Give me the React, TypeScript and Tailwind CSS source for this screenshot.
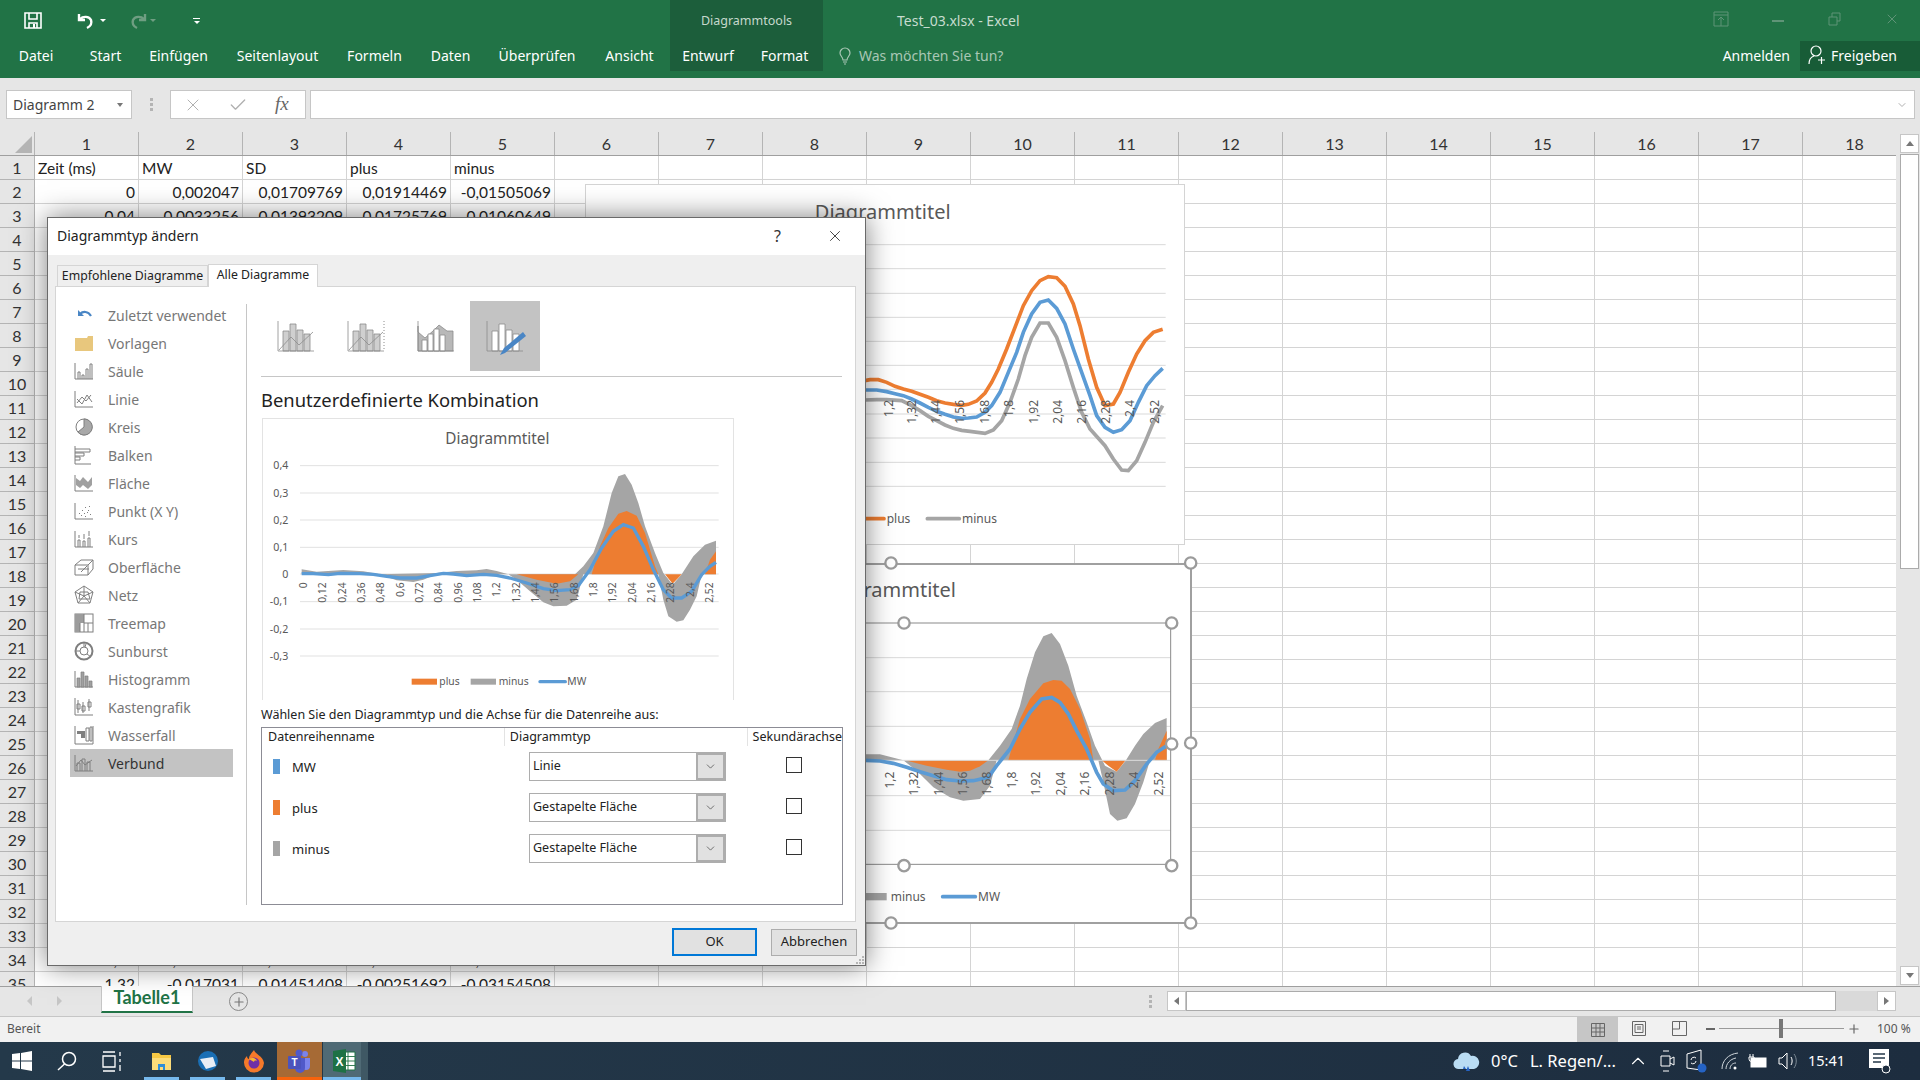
import type { ReactNode } from "react";
import { ChevronDown, X, Check, Plus, ChevronUp } from "lucide-react";

const ORANGE = "#ed7d31";
const BLUE = "#5b9bd5";
const GRAY = "#a5a5a5";
const TEXT = "#595959";

type Pt = number[];
const line = (pts: Pt[]) => pts.map((p) => p.join(",")).join(" ");

const sheetRows: Record<number, string[]> = {
  1: ["Zeit (ms)", "MW", "SD", "plus", "minus"],
  2: ["0", "0,002047", "0,01709769", "0,01914469", "-0,01505069"],
  3: ["0,04", "0,0033256", "0,01393209", "0,01725769", "-0,01060649"],
  34: ["1,28", "-0,0151466", "0,01482059", "-0,00032601", "-0,02996719"],
  35: ["1,32", "-0,017031", "0,01451408", "-0,00251692", "-0,03154508"],
};

function Sheet() {
  const cols = Array.from({ length: 18 }, (_, i) => i + 1);
  const rows = Array.from({ length: 35 }, (_, i) => i + 1);
  return (
    <div className="min-w-0 flex-1 overflow-hidden bg-white font-['Lato',sans-serif] text-[15.5px] text-[#222]">
      <div className="flex h-6 border-b border-[#9f9f9f] bg-[#e6e6e6]">
        <div className="relative w-[35px] shrink-0 border-r border-[#b4b4b4]">
          <div className="absolute right-[2px] bottom-[2px] h-0 w-0 border-b-[17px] border-l-[17px] border-b-[#b4b4b4] border-l-transparent" />
        </div>
        {cols.map((c) => (
          <div key={c} className="flex w-[104px] shrink-0 items-center justify-center border-r border-[#b4b4b4] text-[16px] text-[#333]">
            {c}
          </div>
        ))}
      </div>
      {rows.map((r) => (
        <div key={r} className="flex h-6">
          <div className="flex w-[35px] shrink-0 items-center justify-center border-r border-b border-[#b4b4b4] bg-[#e6e6e6] text-[16px] text-[#333]">
            {r}
          </div>
          {cols.map((c, i) => {
            const v = sheetRows[r]?.[i];
            return (
              <div key={c} className={`flex w-[104px] shrink-0 items-center border-r border-b border-[#d4d4d4] px-[3px] pt-[2px] whitespace-nowrap ${r === 1 ? "justify-start" : "justify-end"}`}>
                {v}
              </div>
            );
          })}
        </div>
      ))}
    </div>
  );
}

function VLabels({ items, top, size, dx }: { items: [string, number][]; top: number; size: number; dx: number }) {
  return (
    <g fontSize={size} fill={TEXT} fontFamily="'Noto Sans',sans-serif">
      {items.map(([t, x]) => (
        <text key={t} textAnchor="end" transform={`translate(${x + dx} ${top}) rotate(-90)`}>
          {t}
        </text>
      ))}
    </g>
  );
}

function TopChart() {
  const grid = [197, 269, 343, 415, 487, 559, 631, 705, 777, 850, 922];
  const orange = [[-60, 604], [15, 605], [30, 602], [55, 602], [80, 610], [105, 622], [130, 630], [155, 637], [180, 646], [205, 655], [230, 665], [255, 672], [280, 676], [305, 679], [325, 676], [350, 666], [375, 642], [395, 610], [415, 570], [440, 510], [465, 445], [490, 380], [515, 335], [540, 305], [565, 293], [590, 296], [615, 322], [640, 375], [660, 440], [685, 540], [710, 625], [735, 680], [760, 675], [780, 640], [805, 580], [830, 525], [855, 485], [880, 460], [908, 451]];
  const blue = [[-60, 633], [15, 633], [50, 633], [80, 638], [105, 644], [130, 650], [155, 660], [180, 672], [205, 685], [230, 697], [255, 706], [280, 714], [305, 718], [325, 717], [350, 714], [375, 700], [395, 680], [420, 640], [445, 580], [470, 520], [490, 460], [515, 405], [540, 370], [565, 363], [590, 388], [615, 435], [640, 510], [665, 580], [690, 650], [710, 710], [735, 745], [760, 760], [785, 752], [810, 725], [835, 670], [860, 620], [885, 590], [908, 568]];
  const gray = [[-60, 663], [15, 663], [50, 662], [80, 662], [125, 665], [155, 680], [180, 695], [205, 712], [230, 725], [255, 738], [280, 748], [305, 754], [330, 757], [375, 763], [400, 753], [425, 725], [450, 670], [475, 600], [495, 530], [515, 475], [540, 432], [565, 432], [590, 475], [615, 545], [640, 625], [665, 700], [690, 750], [735, 800], [760, 840], [785, 873], [805, 875], [830, 845], [855, 790], [880, 730], [908, 680]];
  return (
    <div className="absolute top-[184px] left-[585px] h-[361px] w-[600px] border border-[#d4d4d4] bg-white">
      <svg width="598" height="359" viewBox="-822 18 1794 1077" className="block">
        <text x="272" y="119" textAnchor="end" fontSize="60" fill={TEXT} fontFamily="'Noto Sans',sans-serif">Diagrammtitel</text>
        {grid.map((y) => (
          <line key={y} x1="-700" x2="917" y1={y} y2={y} stroke="#d9d9d9" strokeWidth="3" />
        ))}
        <polyline points={line(gray)} fill="none" stroke={GRAY} strokeWidth="11" />
        <polyline points={line(orange)} fill="none" stroke={ORANGE} strokeWidth="11" />
        <polyline points={line(blue)} fill="none" stroke={BLUE} strokeWidth="11" />
        <VLabels top={663} size={36} dx={13} items={[["1,2", 85], ["1,32", 155], ["1,44", 228], ["1,56", 300], ["1,68", 373], ["1,8", 447], ["1,92", 520], ["2,04", 592], ["2,16", 665], ["2,28", 738], ["2,4", 810], ["2,52", 884]]} />
        <line x1="-60" x2="72" y1="1019" y2="1019" stroke={ORANGE} strokeWidth="11" strokeLinecap="round" />
        <line x1="202" x2="298" y1="1019" y2="1019" stroke={GRAY} strokeWidth="11" strokeLinecap="round" />
        <g fontSize="36" fill={TEXT} fontFamily="'Noto Sans',sans-serif">
          <text x="80" y="1031">plus</text>
          <text x="306" y="1031">minus</text>
        </g>
      </svg>
    </div>
  );
}

function Handle({ x, y }: { x: number; y: number }) {
  return <circle cx={x} cy={y} r="17" fill="#fff" stroke="#9b9b9b" strokeWidth="7" />;
}

function SelectedChart() {
  const gray = [[-60, 616], [60, 616], [95, 625], [130, 634], [385, 634], [420, 590], [455, 540], [480, 470], [500, 390], [525, 310], [550, 262], [575, 252], [600, 285], [625, 350], [650, 440], [680, 520], [705, 590], [735, 650], [770, 668], [797, 635], [825, 590], [850, 555], [885, 522], [920, 507], [920, 634], [870, 634], [850, 700], [825, 765], [800, 808], [772, 815], [750, 795], [730, 700], [715, 634], [410, 634], [390, 710], [360, 750], [310, 755], [270, 745], [220, 715], [170, 665], [130, 634], [-60, 634]];
  const orangeShapes = [
    [[135, 634], [200, 650], [260, 662], [300, 668], [330, 665], [360, 652], [385, 634]],
    [[445, 634], [460, 580], [480, 510], [510, 450], [550, 403], [580, 393], [605, 395], [630, 420], [660, 480], [690, 570], [700, 634]],
    [[725, 634], [745, 650], [770, 668], [797, 634]],
    [[885, 634], [895, 600], [920, 545], [920, 634]],
  ];
  const blue = [[-60, 634], [15, 634], [60, 636], [100, 643], [140, 655], [180, 668], [220, 680], [260, 692], [300, 696], [340, 695], [385, 685], [410, 650], [450, 600], [480, 540], [510, 490], [545, 450], [575, 445], [600, 460], [625, 495], [650, 545], [680, 600], [710, 670], [730, 705], [760, 725], [795, 723], [825, 695], [860, 645], [890, 610], [920, 590]];
  return (
    <div className="absolute top-[563px] left-[585px] h-[361px] w-[607px] border-2 border-[#a0a0a0] bg-white">
      <svg width="603" height="357" viewBox="-819 48 1809 1071" className="block overflow-visible">
        <text x="288" y="143" textAnchor="end" fontSize="60" fill={TEXT} fontFamily="'Noto Sans',sans-serif">Diagrammtitel</text>
        {[326, 428, 532, 740, 844].map((y) => (
          <line key={y} x1="-700" x2="932" y1={y} y2={y} stroke="#d9d9d9" strokeWidth="3" />
        ))}
        <polygon points={line(gray)} fill={GRAY} />
        {orangeShapes.map((s, i) => (
          <polygon key={i} points={line(s)} fill={ORANGE} />
        ))}
        <line x1="-700" x2="932" y1="634" y2="634" stroke="#dcdcdc" strokeWidth="3" />
        <polyline points={line(blue)} fill="none" stroke={BLUE} strokeWidth="11" />
        <VLabels top={668} size={36} dx={13} items={[["1,2", 88], ["1,32", 161], ["1,44", 235], ["1,56", 308], ["1,68", 381], ["1,8", 454], ["1,92", 527], ["2,04", 602], ["2,16", 675], ["2,28", 749], ["2,4", 822], ["2,52", 897]]} />
        <rect x="-400" y="222" width="1332" height="724" fill="none" stroke="#8a8a8a" strokeWidth="3" />
        <rect x="-120" y="1032" width="200" height="22" fill={GRAY} />
        <line x1="248" x2="346" y1="1043" y2="1043" stroke={BLUE} strokeWidth="11" strokeLinecap="round" />
        <g fontSize="36" fill={TEXT} fontFamily="'Noto Sans',sans-serif">
          <text x="92" y="1056">minus</text>
          <text x="354" y="1056">MW</text>
        </g>
        <Handle x={93} y={42} />
        <Handle x={992} y={42} />
        <Handle x={992} y={582} />
        <Handle x={992} y={1122} />
        <Handle x={93} y={1122} />
        <Handle x={132} y={222} />
        <Handle x={935} y={222} />
        <Handle x={935} y={585} />
        <Handle x={935} y={950} />
        <Handle x={132} y={950} />
      </svg>
    </div>
  );
}

function PreviewChart() {
  const gray = [[155, 479], [200, 486], [280, 481], [340, 485], [390, 494], [560, 490], [620, 484], [680, 482], [710, 478], [740, 484], [775, 494], [975, 494], [1000, 470], [1030, 430], [1060, 350], [1085, 250], [1105, 200], [1125, 193], [1145, 225], [1165, 280], [1185, 350], [1215, 430], [1240, 490], [1268, 525], [1295, 494], [1330, 440], [1365, 405], [1398, 393], [1398, 494], [1355, 494], [1340, 560], [1320, 600], [1300, 632], [1280, 636], [1255, 620], [1240, 570], [1225, 494], [1000, 494], [980, 570], [950, 588], [910, 590], [880, 578], [840, 545], [800, 510], [775, 494], [560, 494], [520, 510], [490, 517], [440, 512], [395, 497], [155, 494]];
  const orangeShapes = [
    [[800, 494], [860, 510], [920, 522], [960, 515], [985, 494]],
    [[1025, 494], [1050, 410], [1075, 355], [1105, 312], [1130, 304], [1160, 318], [1185, 370], [1215, 470], [1225, 494]],
    [[1245, 494], [1268, 522], [1295, 494]],
    [[1365, 494], [1380, 450], [1398, 425], [1398, 494]],
  ];
  const blue = [[155, 492], [190, 492], [235, 495], [270, 491], [330, 492], [370, 494], [410, 500], [450, 505], [500, 505], [540, 498], [580, 491], [610, 493], [650, 498], [700, 494], [740, 497], [780, 505], [830, 520], [880, 537], [920, 543], [960, 540], [985, 528], [1020, 480], [1055, 415], [1090, 365], [1120, 345], [1150, 355], [1180, 410], [1210, 480], [1240, 540], [1265, 565], [1295, 565], [1325, 545], [1355, 495], [1380, 470], [1398, 458]];
  const ticks: [string, number][] = [["0,4", 168], ["0,3", 250], ["0,2", 331], ["0,1", 413], ["0", 493], ["-0,1", 576], ["-0,2", 658], ["-0,3", 739]];
  const xs = ["0", "0,12", "0,24", "0,36", "0,48", "0,6", "0,72", "0,84", "0,96", "1,08", "1,2", "1,32", "1,44", "1,56", "1,68", "1,8", "1,92", "2,04", "2,16", "2,28", "2,4", "2,52"];
  const labels = xs.map((t, i) => [t, 160 + i * 58] as [string, number]);
  return (
    <div className="ml-px h-[282px] w-[472px] border-x border-t border-[#e3e3e3]">
      <svg width="470" height="281" viewBox="39 28 1410 843" className="block">
        <text x="742" y="102" textAnchor="middle" fontSize="46" fill={TEXT} fontFamily="'Noto Sans',sans-serif">Diagrammtitel</text>
        {ticks.map(([t, y]) => (
          <g key={t}>
            <line x1="150" x2="1406" y1={y} y2={y} stroke="#e1e1e1" strokeWidth="3" />
            <text x="115" y={y + 11} textAnchor="end" fontSize="32" fill={TEXT} fontFamily="'Noto Sans',sans-serif">{t}</text>
          </g>
        ))}
        <polygon points={line(gray)} fill={GRAY} />
        {orangeShapes.map((s, i) => (
          <polygon key={i} points={line(s)} fill={ORANGE} />
        ))}
        <polyline points={line(blue)} fill="none" stroke={BLUE} strokeWidth="10" />
        <VLabels top={518} size={31} dx={11} items={labels} />
        <rect x="485" y="807" width="76" height="18" fill={ORANGE} />
        <rect x="662" y="807" width="76" height="18" fill={GRAY} />
        <line x1="870" x2="946" y1="816" y2="816" stroke={BLUE} strokeWidth="10" strokeLinecap="round" />
        <g fontSize="31" fill={TEXT} fontFamily="'Noto Sans',sans-serif">
          <text x="568" y="826">plus</text>
          <text x="746" y="826">minus</text>
          <text x="952" y="826">MW</text>
        </g>
      </svg>
    </div>
  );
}

const iconStroke = { fill: "none", stroke: "#7f7f7f", strokeWidth: 1 };

const typeIcons: [string, ReactNode][] = [
  ["Zuletzt verwendet", <g fill="none" stroke="#4a86c5"><path d="M4 5v6h6z" fill="#4a86c5" stroke="none" /><path d="M6 9c3-3 8-3 11 2" strokeWidth="2.200" /></g>],
  ["Vorlagen", <path d="M1 5h12l1-2h5v15H1z" fill="#e8c77d" />],
  ["Säule", <g {...iconStroke}><path d="M1 2v16h18M4 18v-7h2v7M8 18v-4h2v4M12 18V8h2v10M16 18V3h2v15" /></g>],
  ["Linie", <g {...iconStroke}><path d="M1 2v16h18M3 14l5-6 4 4 5-6M3 10l5 5 5-9 5 7" /></g>],
  ["Kreis", <g><circle cx="10" cy="10" r="8" {...iconStroke} /><path d="M10 10V2a8 8 0 1 1-6 13z" fill="#a8a8a8" stroke="#7f7f7f" /></g>],
  ["Balken", <g {...iconStroke}><path d="M1 1v18h16M1 4h15v3H1M1 8h9v3H1M1 12h5v3H1" /></g>],
  ["Fläche", <g><path d="M1 2v16h18" {...iconStroke} /><path d="m2 5 4 3 3-4 5 5 4-5v8l-4 4-5-4-3 3-4-3z" fill="#a0a0a0" /></g>],
  ["Punkt (X Y)", <g><path d="M1 2v16h18" {...iconStroke} /><path d="M5 12h1v1H5zM8 9h1v1H8zM11 6h1v1h-1zM14 9h1v1h-1zM7 14h1v1H7zM10 12h1v1h-1zM13 11h1v1h-1zM15 5h1v1h-1zM11 15h1v1h-1zM16 13h1v1h-1z" fill="#7f7f7f" /></g>],
  ["Kurs", <g {...iconStroke}><path d="M1 2v16h18M4 18v-7h2v7M9 18v-6h2v6M14 18v-9h2v9M5 9V6M10 10V5M15 7V2" /></g>],
  ["Oberfläche", <g {...iconStroke}><path d="m1 8 6-5h12v9l-5 6H1zM1 8h13v10M14 8l5-5M4 12h6l3-3M7 15l3-3h5" /></g>],
  ["Netz", <g {...iconStroke}><path d="m10 1 9 6-3 11H4L1 7zM10 1v10M1 7l9 4 9-4M4 18l6-7 6 7M6 7h8l2 7H5z" /></g>],
  ["Treemap", <g><rect x="1" y="1" width="18" height="18" {...iconStroke} /><path d="M1 1h9v9H1zM1 10h5v9H1z" fill="#9c9c9c" /><path d="M10 1v18M10 10h9M6 10v9M14 10v9" {...iconStroke} /></g>],
  ["Sunburst", <g {...iconStroke}><circle cx="10" cy="10" r="8.500" strokeWidth="2" /><circle cx="10" cy="10" r="4" /><path d="M10 6V2M6 10H2M13 13l4 3M12 3l-1 3" /></g>],
  ["Histogramm", <g><path d="M1 2v16h18" {...iconStroke} /><path d="M3 18v-9h3v9zM7 18V3h3v15zM11 18V7h3v11zM15 18v-6h3v6z" fill="#a0a0a0" stroke="#7f7f7f" strokeWidth=".7" /></g>],
  ["Kastengrafik", <g {...iconStroke}><path d="M1 1v17h18M4 3v13M9 5v11M15 2v12M3 7h3v5H3zM8 9h3v5H8zM14 5h3v5h-3z" /></g>],
  ["Wasserfall", <g><path d="M1 1v18h18V1" {...iconStroke} /><path d="M3 6h4v3H3zM7 6h4v7H7z" fill="#7f7f7f" /><path d="M12 3h3v13h-3zM16 2h2v14h-2z" {...iconStroke} /></g>],
  ["Verbund", <g {...iconStroke}><path d="M1 2v16h18M3 18v-8h3v8M8 18V6h3v12M13 18v-9h3v9M2 13l5-6 4 5 7-5" /></g>],
];

function ChartTypeIcon({ kind }: { kind: number }) {
  const bars = kind === 2 ? "M5 31V20h5v11zM11 31V14h5v17zM17 31V9h5v22zM23 31V15h5v16z" : "M6 31V11h6v20zM13 31V4h6v27zM20 31V10h6v21zM27 31V14h6v17z";
  return (
    <svg width="38" height="32" viewBox="0 0 38 32" className="overflow-visible">
      {kind === 2 && <path d="M1 6v6l7 6 8-7 6-6 8 6h6v20H1z" fill="#b8b8b8" stroke="#8c8c8c" strokeWidth=".8" />}
      <path d={bars} fill={kind === 0 || kind === 1 ? "#cfcfcf" : "#fff"} stroke="#8c8c8c" strokeWidth=".8" />
      <path d="M1 1v30h36" fill="none" stroke="#8c8c8c" strokeWidth=".8" />
      {kind < 2 && <path d="M2 30 14 17l8 8 14-13" fill="none" stroke="#8c8c8c" strokeWidth=".8" />}
      {kind === 1 && <path d="M37 1v30" stroke="#8c8c8c" strokeDasharray="1 2" />}
      {kind === 3 && <path d="M14 35 18 28 37 12l3 4-21 17z" fill="#4a86c5" />}
    </svg>
  );
}

function ComboRow({ color, name, type }: { color: string; name: string; type: string }) {
  return (
    <div className="flex h-[41px] items-center">
      <div className="ml-[11px] h-[15px] w-[7px] shrink-0" style={{ backgroundColor: color }} />
      <div className="ml-[12px] w-[237px] shrink-0 pt-[2px] text-[13px] text-[#222]">{name}</div>
      <div className="flex h-[29px] w-[197px] shrink-0 items-center border border-[#adadad] bg-white">
        <span className="flex-1 pl-[3px] text-[12.5px] text-[#222]">{type}</span>
        <span className="flex h-full w-[29px] items-center justify-center border-2 border-[#adadad] bg-[#e1e1e1]">
          <ChevronDown size={13} strokeWidth={1.2} color="#333" />
        </span>
      </div>
      <div className="mb-[3px] ml-[60px] h-4 w-4 border border-[#333] bg-white" />
    </div>
  );
}

function ChartDialog() {
  return (
    <div className="absolute top-[217px] left-[47px] flex h-[749px] w-[819px] flex-col border border-[#6a6a6a] bg-[#efefef] font-['Noto_Sans',sans-serif] shadow-[0_0_26px_rgba(0,0,0,0.5)]">
      <div className="flex h-[37px] shrink-0 items-center bg-white pb-[2px] pl-[9px] text-[14px] text-[#222]">
        <span className="flex-1">Diagrammtyp ändern</span>
        <span className="mr-[45px] text-[16px] text-[#333]">?</span>
        <X size={18} strokeWidth={1.2} color="#333" className="mr-[21px]" />
      </div>
      <div className="flex h-[31px] shrink-0 items-end pl-[9px] text-[12.3px] text-[#222]">
        <div className="flex h-[21px] w-[151px] items-center justify-center border border-b-0 border-[#d5d5d5] bg-[#efefef] whitespace-nowrap">Empfohlene Diagramme</div>
        <div className="-mb-px z-10 flex h-[23px] w-[110px] items-center justify-center border border-b-0 border-[#d5d5d5] bg-white pb-[1px]">Alle Diagramme</div>
      </div>
      <div className="mx-[7px] flex h-[636px] w-[801px] shrink-0 border border-[#d5d5d5] bg-white">
        <div className="w-[190px] shrink-0 pt-[14px] pr-[13px] pl-[14px]">
          <div className="flex h-[614px] flex-col">
            {typeIcons.map(([label, icon]) => (
              <div key={label} className={`flex h-7 shrink-0 items-center gap-[14px] pl-[4px] text-[14px] ${label === "Verbund" ? "bg-[#c3c3c3] text-[#333]" : "text-[#777]"}`}>
                <svg width="20" height="20" viewBox="0 0 20 20" className="shrink-0">{icon}</svg>
                {label}
              </div>
            ))}
          </div>
        </div>
        <div className="mt-[17px] mb-[16px] w-px shrink-0 bg-[#c6c6c6]" />
        <div className="ml-[14px] w-[581px] pt-[14px]">
          <div className="flex h-[76px] border-b border-[#c6c6c6]">
            {[0, 1, 2, 3].map((k) => (
              <div key={k} className={`flex h-[70px] w-[70px] items-center justify-center ${k === 3 ? "ml-[-1px] bg-[#c3c3c3]" : ""}`}>
                <ChartTypeIcon kind={k} />
              </div>
            ))}
          </div>
          <div className="flex h-[41px] items-center pt-[5px] text-[18.4px] whitespace-nowrap text-[#222]">Benutzerdefinierte Kombination</div>
          <PreviewChart />
          <div className="flex h-[27px] items-center pt-[4px] text-[12.5px] text-[#222]">Wählen Sie den Diagrammtyp und die Achse für die Datenreihe aus:</div>
          <div className="h-[178px] w-[582px] border border-[#8c8c95]">
            <div className="flex h-[18px] text-[12.5px] text-[#222]">
              <div className="flex w-[243px] items-center border-r border-[#e3e3e3] pl-[6px]">Datenreihenname</div>
              <div className="flex w-[243px] items-center border-r border-[#e3e3e3] pl-[5px]">Diagrammtyp</div>
              <div className="flex flex-1 items-center pl-[5px] whitespace-nowrap">Sekundärachse</div>
            </div>
            <ComboRow color={BLUE} name="MW" type="Linie" />
            <ComboRow color={ORANGE} name="plus" type="Gestapelte Fläche" />
            <ComboRow color={GRAY} name="minus" type="Gestapelte Fläche" />
          </div>
        </div>
      </div>
      <div className="relative flex flex-1 items-center justify-end gap-[14px] pr-[8px] pb-[3px] text-[13px] text-[#222]">
        <div className="flex h-[28px] w-[85px] items-center justify-center border-2 border-[#0078d7] bg-[#e1e1e1]">OK</div>
        <div className="flex h-[27px] w-[86px] items-center justify-center border border-[#adadad] bg-[#e1e1e1]">Abbrechen</div>
        <div className="absolute right-[1px] bottom-[1px] grid grid-cols-3 gap-px">
          {[0, 1, 2, 3, 4, 5, 6, 7, 8].map((i) => (
            <span key={i} className={`h-[2px] w-[2px] ${[0, 1, 3].includes(i) ? "" : "bg-[#b5b5b5]"}`} />
          ))}
        </div>
      </div>
    </div>
  );
}

const tabs = [
  { label: "Datei", cls: "w-[72px]" },
  { label: "Start", cls: "ml-1 w-[59px]" },
  { label: "Einfügen", cls: "w-[87px]" },
  { label: "Seitenlayout", cls: "w-[111px]" },
  { label: "Formeln", cls: "w-[83px]" },
  { label: "Daten", cls: "w-[69px]" },
  { label: "Überprüfen", cls: "w-[104px]" },
  { label: "Ansicht", cls: "w-[81px]" },
];

function Ribbon() {
  return (
    <div className="h-[78px] shrink-0 bg-[#217346] font-['Noto_Sans',sans-serif] text-[14px] text-white">
      <div className="flex h-[41px]">
        <div className="flex w-[670px] shrink-0 items-center pl-[24px]">
          <svg width="18" height="17" viewBox="0 0 18 17" fill="none" stroke="#fff" strokeWidth="1.600">
            <path d="M1 1h16v15H1zM5 1v6h8V1M5 16v-5h8v5" />
            <path d="M9 12h2v4H9z" fill="#fff" stroke="none" />
          </svg>
          <svg width="20" height="18" viewBox="0 0 20 18" className="ml-[35px]" fill="none" stroke="#fff" strokeWidth="2.400">
            <path d="M2 2v6h6M3 7c3-3 9-3 11 1 1 3 0 6-4 8" />
          </svg>
          <span className="ml-[3px] h-0 w-0 border-x-[3px] border-t-[3px] border-x-transparent border-t-white" />
          <svg width="20" height="18" viewBox="0 0 20 18" className="ml-[21px]" fill="none" stroke="#6f9e82" strokeWidth="2.400">
            <path d="M18 2v6h-6M17 7c-3-3-9-3-11 1-1 3 0 6 4 8" />
          </svg>
          <span className="ml-[3px] h-0 w-0 border-x-[3px] border-t-[3px] border-x-transparent border-t-[#6f9e82]" />
          <span className="ml-[37px] flex flex-col items-center gap-[2px]">
            <span className="h-px w-[7px] bg-white" />
            <span className="h-0 w-0 border-x-[3.5px] border-t-[3.5px] border-x-transparent border-t-white" />
          </span>
        </div>
        <div className="flex w-[153px] shrink-0 items-center justify-center bg-[#1c5e3b] pt-[2px] text-[12.5px] text-[#c5d8cc]">Diagrammtools</div>
        <div className="ml-[74px] flex items-center text-[#c7dccf]">Test_03.xlsx - Excel</div>
        <div className="ml-auto flex">
          <div className="flex h-[38px] w-[57px] items-center justify-center">
            <svg width="16" height="16" viewBox="0 0 16 16" fill="none" stroke="#5f9477"><path d="M1 1h14v14H1zM1 4h14M8 15V7M5 9l3-3 3 3" /></svg>
          </div>
          <div className="flex h-[38px] w-[57px] items-center justify-center"><span className="mt-[4px] h-[2px] w-[12px] bg-[#5f9477]" /></div>
          <div className="flex h-[38px] w-[57px] items-center justify-center">
            <svg width="13" height="14" viewBox="0 0 13 14" fill="none" stroke="#5f9477"><path d="M1 5h8v8H1zM4 5V1h8v8H9" /></svg>
          </div>
          <div className="flex h-[38px] w-[57px] items-center justify-center"><X size={16} strokeWidth={1.5} color="#5f9477" /></div>
        </div>
      </div>
      <div className="flex h-[30px] items-center text-center">
        {tabs.map((t) => (
          <div key={t.label} className={`${t.cls} pb-[2px]`}>{t.label}</div>
        ))}
        <div className="flex h-full w-[153px] items-center bg-[#1c5e3b] pb-[2px] text-center">
          <div className="w-[76px]">Entwurf</div>
          <div className="w-[77px]">Format</div>
        </div>
        <svg width="14" height="18" viewBox="0 0 14 18" className="ml-[15px]" fill="none" stroke="#a9c7b5" strokeWidth="1.200">
          <path d="M5 13c0-3-3-4-3-7a5 5 0 0 1 10 0c0 3-3 4-3 7zM5 15h4M6 17h2" />
        </svg>
        <span className="ml-[7px] pb-[2px] text-[#a9c7b5]">Was möchten Sie tun?</span>
        <span className="ml-auto pb-[2px]">Anmelden</span>
        <div className="ml-[10px] flex h-full w-[120px] items-center gap-[5px] bg-[#185c37] pb-[2px] pl-[8px]">
          <svg width="18" height="20" viewBox="0 0 18 20" fill="none" stroke="#fff" strokeWidth="1.200">
            <circle cx="8" cy="6" r="5" />
            <path d="M1 19c0-4 2-7 5-8M10 15h7M13.5 12v7" />
          </svg>
          Freigeben
        </div>
      </div>
    </div>
  );
}

function FormulaBar() {
  return (
    <div className="flex h-[54px] shrink-0 items-start bg-[#e6e6e6] pt-[12px] pr-[5px] pl-[6px] font-['Noto_Sans',sans-serif]">
      <div className="flex h-[29px] w-[126px] items-center justify-between border border-[#c6c6c6] bg-white pr-[8px] pl-[6px] text-[14px] text-[#444]">
        Diagramm 2
        <span className="h-0 w-0 border-x-[3.5px] border-t-[4px] border-x-transparent border-t-[#777]" />
      </div>
      <div className="mt-[8px] mr-[17px] ml-[18px] flex flex-col gap-[2px]">
        <span className="h-[3px] w-[3px] bg-[#b4b4b4]" />
        <span className="h-[3px] w-[3px] bg-[#b4b4b4]" />
        <span className="h-[3px] w-[3px] bg-[#b4b4b4]" />
      </div>
      <div className="flex h-[29px] w-[136px] items-center border border-[#c6c6c6] bg-white">
        <X size={20} strokeWidth={1.2} color="#b0b0b0" className="ml-[12px]" />
        <Check size={20} strokeWidth={1.6} color="#b0b0b0" className="ml-[25px]" />
        <span className="ml-[27px] font-['Liberation_Serif',serif] text-[19px] text-[#666] italic">fx</span>
      </div>
      <div className="ml-[4px] flex h-[29px] flex-1 items-center justify-end border border-[#c6c6c6] bg-white pr-[6px]">
        <ChevronDown size={12} strokeWidth={2} color="#b0b0b0" />
      </div>
    </div>
  );
}

function VScroll() {
  return (
    <div className="flex w-[24px] shrink-0 flex-col items-center bg-[#e6e6e6] pt-[2px] pl-[3px]">
      <div className="flex h-[19px] w-[19px] items-center justify-center border border-[#c6c6c6] bg-white">
        <span className="h-0 w-0 border-x-[4px] border-b-[5px] border-x-transparent border-b-[#777]" />
      </div>
      <div className="mt-[1px] h-[415px] w-[19px] border border-[#ababab] bg-white" />
      <div className="mt-auto mb-[1px] flex h-[19px] w-[19px] items-center justify-center border border-[#c6c6c6] bg-white">
        <span className="h-0 w-0 border-x-[4px] border-t-[5px] border-x-transparent border-t-[#777]" />
      </div>
    </div>
  );
}

function SheetTabs() {
  return (
    <div className="flex h-[30px] shrink-0 border-t border-[#9f9f9f] bg-[#e6e6e6] font-['Lato',sans-serif]">
      <span className="mt-[9px] ml-[27px] h-0 w-0 border-y-[5px] border-r-[5px] border-y-transparent border-r-[#c6c6c6]" />
      <span className="mt-[9px] ml-[25px] h-0 w-0 border-y-[5px] border-l-[5px] border-y-transparent border-l-[#c6c6c6]" />
      <div className="-mt-px ml-[39px] flex h-[27px] w-[92px] items-center justify-center border-x border-b-2 border-x-[#c6c6c6] border-b-[#217346] bg-white pb-[3px] text-[18px] font-bold text-[#217346]">
        Tabelle1
      </div>
      <div className="mt-[5px] ml-[36px] flex h-[19px] w-[19px] items-center justify-center rounded-full border-[1.5px] border-[#8a8a8a]">
        <Plus size={14} strokeWidth={2} color="#777" />
      </div>
      <div className="mt-[8px] ml-[901px] flex flex-col gap-[2px]">
        <span className="h-[3px] w-[3px] bg-[#b4b4b4]" />
        <span className="h-[3px] w-[3px] bg-[#b4b4b4]" />
        <span className="h-[3px] w-[3px] bg-[#b4b4b4]" />
      </div>
      <div className="mt-[4px] ml-[15px] flex h-[20px] w-[729px] bg-[#d9d9d9]">
        <div className="flex h-full w-[19px] items-center justify-center border border-[#c6c6c6] bg-white">
          <span className="h-0 w-0 border-y-[4px] border-r-[5px] border-y-transparent border-r-[#777]" />
        </div>
        <div className="h-full w-[650px] border border-[#ababab] bg-white" />
        <div className="ml-auto flex h-full w-[19px] items-center justify-center border border-[#c6c6c6] bg-white">
          <span className="h-0 w-0 border-y-[4px] border-l-[5px] border-y-transparent border-l-[#777]" />
        </div>
      </div>
    </div>
  );
}

function StatusBar() {
  return (
    <div className="flex h-[26px] shrink-0 items-center border-t border-[#c6c6c6] bg-[#f1f1f1] pb-[2px] pl-[7px] font-['Noto_Sans',sans-serif] text-[12px] text-[#555]">
      <span>Bereit</span>
      <div className="mb-[-2px] ml-auto flex h-[25px] w-[41px] items-center justify-center bg-[#c6c6c6]">
        <svg width="14" height="14" viewBox="0 0 14 14" fill="none" stroke="#666"><path d="M.5.5h13v13H.5zM5 .5v13M9 .5v13M.5 5h13M.5 9h13" /></svg>
      </div>
      <div className="flex w-[41px] justify-center">
        <svg width="14" height="15" viewBox="0 0 14 15" fill="none" stroke="#666"><path d="M.5.5h13v14H.5zM3 3.5h8v8H3zM5 6h4M5 8h4" /></svg>
      </div>
      <div className="flex w-[41px] justify-center">
        <svg width="15" height="15" viewBox="0 0 15 15" fill="none" stroke="#666"><path d="M.5.500h14v14H.5zM7.5.5V8H.5" /></svg>
      </div>
      <span className="ml-[6px] h-[2px] w-[9px] bg-[#666]" />
      <div className="relative ml-[4px] h-px w-[125px] bg-[#9a9a9a]">
        <span className="absolute -top-[9px] left-[60px] h-[19px] w-[4px] bg-[#777]" />
      </div>
      <Plus size={14} strokeWidth={2} color="#666" className="ml-[3px]" />
      <span className="ml-[16px] w-[43px] text-[#555]">100 %</span>
    </div>
  );
}

function TaskApp({ cls, bar, children }: { cls: string; bar: string; children: ReactNode }) {
  return (
    <div className={`relative flex h-full items-center justify-center ${cls}`}>
      {children}
      <span className={`absolute right-0 bottom-0 left-0 h-[3px] ${bar}`} />
    </div>
  );
}

function Taskbar() {
  return (
    <div className="flex h-[38px] shrink-0 items-center bg-gradient-to-r from-[#24394a] to-[#1d2d3f] font-['Noto_Sans',sans-serif] text-white">
      <svg width="20" height="20" viewBox="0 0 20 20" fill="#fff" className="ml-[12px]">
        <path d="M0 3l8-1v7.5H0zM9 2l11-2v9.500H9zM0 10.500h8V18l-8-1zM9 10.500h11V20L9 18z" />
      </svg>
      <svg width="20" height="20" viewBox="0 0 20 20" fill="none" stroke="#fff" strokeWidth="1.500" className="ml-[25px]">
        <circle cx="12" cy="8" r="6.500" />
        <path d="M7.500 13 1 19" />
      </svg>
      <svg width="21" height="21" viewBox="0 0 21 21" fill="none" stroke="#fff" strokeWidth="1.300" className="ml-[25px]">
        <path d="M1 1h12M1 20h12M1 5h12v11H1zM18 1v4M18 8v3M18 14v6" />
      </svg>
      <TaskApp cls="ml-[21px] w-[35px]" bar="bg-[#76b9ed]">
        <svg width="21" height="19" viewBox="0 0 21 19">
          <path d="M1 1h7l2 2h10v4H1z" fill="#f6c844" />
          <path d="M1 6h19v12H1z" fill="#fbdc7a" />
          <path d="M7 18v-6h7v6h-2v-3H9v3z" fill="#2f8ed8" />
        </svg>
      </TaskApp>
      <TaskApp cls="ml-[11px] w-[35px]" bar="bg-[#76b9ed]">
        <svg width="22" height="22" viewBox="0 0 22 22">
          <circle cx="11" cy="11" r="10" fill="#1a6fb5" />
          <path d="M3 9l13-2 3 9-10 3z" fill="#e9eef5" />
        </svg>
      </TaskApp>
      <TaskApp cls="ml-[11px] w-[35px]" bar="bg-[#76b9ed]">
        <svg width="22" height="24" viewBox="0 0 22 24">
          <path d="M11 1c1 4 9 6 10 13a10 10 0 1 1-20-1c0-3 2-5 3-6 0 2 1 3 2 3 0-4 3-6 5-9z" fill="#f5792a" />
          <circle cx="11" cy="14" r="5.500" fill="#6e2fa8" />
          <path d="M6 10c3-2 7-1 8 2-2-1-3 0-3 1z" fill="#f7b733" />
        </svg>
      </TaskApp>
      <TaskApp cls="ml-[6px] w-[45px] bg-[#a66a35]" bar="bg-[#f7630c]">
        <svg width="24" height="24" viewBox="0 0 24 24" className="mr-[2px]">
          <circle cx="18" cy="5" r="3" fill="#7b83eb" />
          <circle cx="12" cy="4" r="3.500" fill="#5059c9" />
          <path d="M14 9h9v8a4 4 0 0 1-8 0z" fill="#7b83eb" />
          <path d="M8 9h10v10a5 5 0 0 1-10 0z" fill="#5059c9" />
          <rect x="1" y="7" width="13" height="13" rx="1" fill="#4b53bc" />
          <text x="7.500" y="17" textAnchor="middle" fontSize="10" fontWeight="700" fill="#fff" fontFamily="'Liberation Sans',sans-serif">T</text>
        </svg>
      </TaskApp>
      <TaskApp cls="ml-px w-[38px] bg-[#4f6a75] pl-[4px]" bar="bg-[#76b9ed]">
        <svg width="23" height="24" viewBox="0 0 23 24">
          <path d="M8 3h14v18H8z" fill="#fff" stroke="#217346" />
          <path d="M15 3v18M8 7.500h14M8 12h14M8 16.500h14" stroke="#217346" strokeWidth=".9" />
          <path d="M0 2l13-2v24L0 22z" fill="#1e7145" />
          <text x="6.500" y="16.500" textAnchor="middle" fontSize="12" fontWeight="700" fill="#fff" fontFamily="'Liberation Sans',sans-serif">X</text>
        </svg>
      </TaskApp>
      <div className="h-full w-[7px] bg-[#3f5864]" />

      <svg width="27" height="24" viewBox="0 0 27 24" className="ml-auto">
        <path d="M6 20a5 5 0 0 1-1-10 7 7 0 0 1 13-3 6.500 6.500 0 0 1 3 13z" fill="#b9dcf3" />
        <path d="M13 22l2-5 2 5zM10 20l1-3 2 3z" fill="#2563c4" />
      </svg>
      <span className="ml-[11px] text-[16.5px]">0°C</span>
      <span className="ml-[12px] text-[16.5px]">L. Regen/...</span>
      <ChevronUp size={22} strokeWidth={1.2} color="#fff" className="ml-[11px]" />
      <svg width="15" height="22" viewBox="0 0 15 22" fill="none" stroke="#fff" className="ml-[11px]">
        <path d="M3 1h6M3 21h6M1 6h9v10H1zM10 9l4-2v8l-4-2" />
      </svg>
      <svg width="22" height="24" viewBox="0 0 22 24" className="ml-[11px]">
        <path d="M1 5l14-4v20L1 19z" fill="none" stroke="#fff" />
        <path d="M5 11a3 3 0 0 1 5-2M10 12a3 3 0 0 1-5 2" fill="none" stroke="#fff" />
        <circle cx="16" cy="19" r="4.500" fill="#2563c4" />
      </svg>
      <svg width="18" height="18" viewBox="0 0 18 18" fill="none" stroke="#cfd6db" className="ml-[13px]">
        <path d="M1 17C1 9 7 2 17 1M5 17c0-5 4-10 10-11M9 17c0-3 2-6 6-6" />
        <circle cx="14" cy="16" r="1.500" fill="#fff" stroke="none" />
      </svg>
      <svg width="20" height="14" viewBox="0 0 20 14" className="ml-[9px]">
        <path d="M2 0v3M5 0v3M1 3h5v2a2.500 2.500 0 0 1-5 0zM3.500 7v3" stroke="#fff" fill="none" />
        <rect x="3" y="4" width="15" height="9" fill="#fff" stroke="#fff" />
      </svg>
      <svg width="20" height="20" viewBox="0 0 20 20" fill="none" stroke="#fff" className="ml-[10px]">
        <path d="M1 7h3l5-5v16l-5-5H1zM13 6c1.500 2 1.500 6 0 8" />
        <path d="M16 3c3 4 3 10 0 14" stroke="#7d8b96" />
      </svg>
      <span className="ml-[10px] text-[14.5px]">15:41</span>
      <svg width="22" height="26" viewBox="0 0 22 26" className="mr-[29px] ml-[24px]">
        <path d="M0 1h20v19H0z" fill="#fff" />
        <path d="M4 6h12M4 10h12M4 14h8" stroke="#24394a" strokeWidth="1.400" />
        <circle cx="17" cy="21" r="4" fill="#1e2e40" stroke="#fff" />
      </svg>
    </div>
  );
}

export default function App() {
  return (
    <div className="relative flex h-[1080px] w-[1920px] flex-col overflow-hidden bg-white">
      <Ribbon />
      <FormulaBar />
      <div className="flex h-[854px] shrink-0">
        <Sheet />
        <VScroll />
      </div>
      <SheetTabs />
      <StatusBar />
      <Taskbar />
      <TopChart />
      <SelectedChart />
      <ChartDialog />
    </div>
  );
}
